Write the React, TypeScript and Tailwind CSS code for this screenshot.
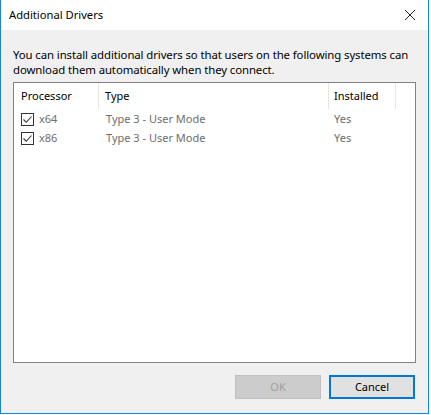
const rows = [
  { proc: 'x64', type: 'Type 3 - User Mode', installed: 'Yes' },
  { proc: 'x86', type: 'Type 3 - User Mode', installed: 'Yes' },
];

function Check() {
  return (
    <span className="flex h-[13px] w-[13px] items-center justify-center border border-[#333333] bg-white">
      <svg width="11" height="11" viewBox="0 0 11 11" fill="none">
        <path d="M1.5 5.5 L4.3 8.3 L9.5 2.5" stroke="#333333" strokeWidth="1.1" />
      </svg>
    </span>
  );
}

export default function App() {
  return (
    <div className="h-[415px] w-[431px] bg-white">
      <div
        className="flex h-[414px] w-[429px] flex-col border-x border-b border-[#1883d7] text-[11px] text-black"
        style={{ fontFamily: '"Noto Sans", "Open Sans", sans-serif' }}
      >
        <div className="flex h-[30px] items-center justify-between bg-white pl-[8px] pr-[12px]">
          <span className="text-[11.2px]">Additional Drivers</span>
          <svg width="12" height="12" viewBox="0 0 12 12" fill="none">
            <path d="M1 1 L11 11 M11 1 L1 11" stroke="#222222" strokeWidth="1" />
          </svg>
        </div>
        <div className="flex flex-1 flex-col bg-[#f0f0f0] px-[12px]">
          <p className="mt-[17px] whitespace-nowrap text-[11.4px] leading-[15px] tracking-[-0.1px]">
            You can install additional drivers so that users on the following systems can
            <br />
            download them automatically when they connect.
          </p>
          <div className="mt-[5px] h-[281px] border border-[#828282] bg-white">
            <div className="flex h-[26px] items-center">
              <div className="flex h-full w-[85px] items-center border-r border-[#e5e5e5] pl-[7px]">Processor</div>
              <div className="flex h-full w-[230px] items-center border-r border-[#e5e5e5] pl-[6px]">Type</div>
              <div className="flex h-full w-[67px] items-center border-r border-[#e5e5e5] pl-[5px]">Installed</div>
            </div>
            <div className="mt-[1px] text-[#6d6d6d]">
              {rows.map((r) => (
                <div key={r.proc} className="flex h-[19px] items-center">
                  <div className="flex w-[85px] items-center gap-[5px] pl-[7px]">
                    <Check />
                    <span>{r.proc}</span>
                  </div>
                  <div className="w-[230px] pl-[7px]">{r.type}</div>
                  <div className="pl-[5px]">{r.installed}</div>
                </div>
              ))}
            </div>
          </div>
          <div className="mt-[12px] flex justify-end gap-[8px] pr-[1px]">
            <button className="h-[24px] w-[86px] border border-[#bfbfbf] bg-[#cccccc] text-[#a0a0a0]">OK</button>
            <button className="h-[24px] w-[86px] border-2 border-[#0078d7] bg-[#e1e1e1] text-black">Cancel</button>
          </div>
        </div>
      </div>
    </div>
  );
}
